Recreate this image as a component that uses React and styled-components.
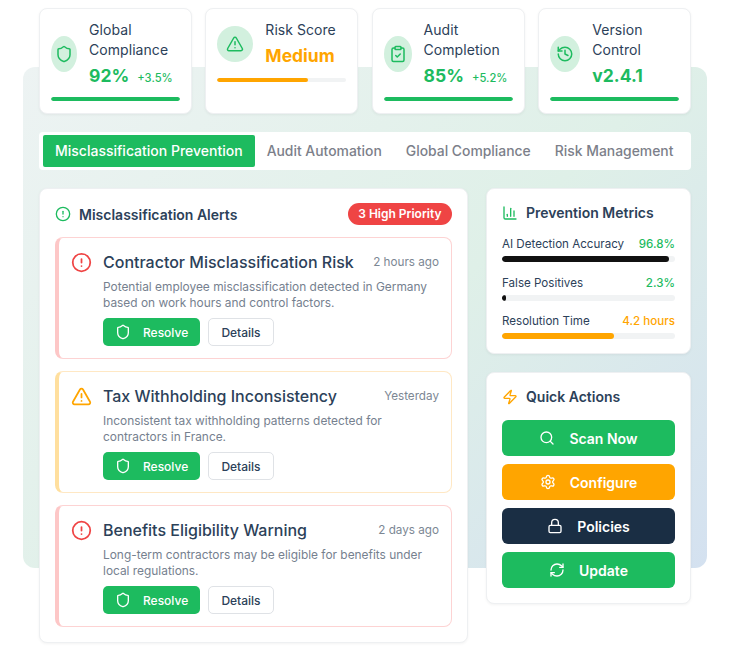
import React from "react";
import styled, { createGlobalStyle } from "styled-components";
import {
  Shield,
  TriangleAlert,
  ClipboardCheck,
  History,
  CircleAlert,
  ChartColumn,
  Zap,
  Search,
  Settings,
  Lock,
  RefreshCw,
} from "lucide-react";

const GREEN = "#1dbb5f";
const ORANGE = "#ffa500";
const RED = "#ef4444";
const NAVY = "#1a2e44";

const stats = [
  { label: "Global Compliance", value: "92%", delta: "+3.5%", icon: Shield, fill: 100 },
  { label: "Risk Score", value: "Medium", icon: TriangleAlert, fill: 70, warn: true },
  { label: "Audit Completion", value: "85%", delta: "+5.2%", icon: ClipboardCheck, fill: 100 },
  { label: "Version Control", value: "v2.4.1", icon: History, fill: 100 },
];

const tabs = ["Misclassification Prevention", "Audit Automation", "Global Compliance", "Risk Management"];

const alerts = [
  {
    title: "Contractor Misclassification Risk",
    time: "2 hours ago",
    text: "Potential employee misclassification detected in Germany based on work hours and control factors.",
    level: "high",
  },
  {
    title: "Tax Withholding Inconsistency",
    time: "Yesterday",
    text: "Inconsistent tax withholding patterns detected for contractors in France.",
    level: "medium",
  },
  {
    title: "Benefits Eligibility Warning",
    time: "2 days ago",
    text: "Long-term contractors may be eligible for benefits under local regulations.",
    level: "high",
  },
];

const metrics = [
  { label: "AI Detection Accuracy", value: "96.8%", fill: 96.8 },
  { label: "False Positives", value: "2.3%", fill: 2.3 },
  { label: "Resolution Time", value: "4.2 hours", fill: 65, warn: true },
];

const actions = [
  { label: "Scan Now", icon: Search, color: GREEN },
  { label: "Configure", icon: Settings, color: ORANGE },
  { label: "Policies", icon: Lock, color: NAVY },
  { label: "Update", icon: RefreshCw, color: GREEN },
];

const GlobalStyle = createGlobalStyle`
  body {
    margin: 0;
    background: #fff;
    font-family: Inter, "Liberation Sans", sans-serif;
  }
`;

const Page = styled.div`
  position: relative;
  z-index: 0;
  box-sizing: border-box;
  width: 730px;
  height: 670px;
  padding: 8px 39px 0;

  &::before {
    content: "";
    position: absolute;
    z-index: -1;
    left: 23px;
    top: 67px;
    width: 684px;
    height: 501px;
    border-radius: 12px;
    background: linear-gradient(135deg, #edf3f3 0%, #dff0e8 55%, #d4e1f0 100%);
  }
`;

const StatGrid = styled.div`
  display: grid;
  grid-template-columns: repeat(4, minmax(0, 1fr));
  column-gap: 13.33px;
  height: 106px;
`;

const StatCard = styled.div`
  box-sizing: border-box;
  padding: 11px 11px 0;
  background: #fff;
  border: 1px solid #eef0f2;
  border-radius: 8px;
  box-shadow: 0 1px 3px rgba(0, 0, 0, 0.05);
`;

const StatTop = styled.div`
  display: flex;
  align-items: center;
  gap: 12px;
`;

const StatIcon = styled.div`
  display: flex;
  align-items: center;
  justify-content: center;
  width: 36px;
  height: 36px;
  border-radius: 50%;
  background: #d2f0de;
  color: ${GREEN};
  svg {
    flex: none;
  }
`;

const StatLabel = styled.div`
  font-size: 14px;
  line-height: 20px;
  letter-spacing: 0.05px;
  color: #2c4159;
`;

const StatRow = styled.div`
  display: flex;
  align-items: baseline;
  gap: 8px;
  margin-top: 4px;
  white-space: nowrap;
`;

const StatValue = styled.span`
  font-size: 17.5px;
  line-height: 24px;
  font-weight: 700;
  color: ${(p) => (p.$warn ? ORANGE : GREEN)};
`;

const StatDelta = styled.span`
  font-size: 11.2px;
  font-weight: 500;
  color: ${GREEN};
`;

const Track = styled.div`
  height: ${(p) => p.$h}px;
  margin-top: ${(p) => p.$mt}px;
  border-radius: 3px;
  background: #f1f3f4;
  overflow: hidden;
`;

const Fill = styled.div`
  height: 100%;
  border-radius: 3px;
  background: ${(p) => p.$color};
`;

const TabBar = styled.div`
  display: flex;
  box-sizing: border-box;
  height: 38px;
  margin-top: 18px;
  padding: 3px 4px;
  background: #fff;
  border-radius: 4px;
`;

const Tab = styled.div`
  display: flex;
  align-items: center;
  padding: 0 12px 1px;
  border-radius: 2px;
  font-size: ${(p) => (p.$active ? 14 : 13.9)}px;
  font-weight: 500;
  white-space: nowrap;
  color: ${(p) => (p.$active ? "#fff" : "#7c7f8a")};
  background: ${(p) => (p.$active ? GREEN : "transparent")};
`;

const Columns = styled.div`
  display: grid;
  grid-template-columns: 429px 205px;
  column-gap: 18px;
  align-items: start;
  margin-top: 18px;
`;

const Panel = styled.div`
  box-sizing: border-box;
  padding: 15px;
  background: #fff;
  border: 1px solid #eef0f2;
  border-radius: 8px;
  box-shadow: 0 1px 3px rgba(0, 0, 0, 0.05);
`;

const AlertPanel = styled(Panel)`
  padding-top: 14px;
`;

const MetricPanel = styled(Panel)`
  padding-bottom: 14px;
`;

const PanelHead = styled.div`
  display: flex;
  align-items: center;
  justify-content: space-between;
  height: 22px;
`;

const PanelTitle = styled.div`
  display: flex;
  align-items: center;
  gap: 8px;
  font-size: 14px;
  font-weight: 600;
  color: #2c4159;
  svg {
    color: ${(p) => p.$icon};
  }
`;

const Badge = styled.span`
  padding: 0 10.5px;
  line-height: 22px;
  border-radius: 11px;
  background: ${RED};
  color: #fff;
  font-size: 12px;
  font-weight: 600;
`;

const AlertList = styled.div`
  display: flex;
  flex-direction: column;
  gap: 12px;
  margin-top: 12px;
`;

const AlertCard = styled.div`
  display: flex;
  gap: 13px;
  box-sizing: border-box;
  height: 122px;
  padding: 14px 12px 12px;
  border: 1px solid ${(p) => (p.$level === "high" ? "#fdd3d3" : "#ffe8c4")};
  border-left: 4px solid ${(p) => (p.$level === "high" ? "#fdc7c7" : "#ffdf9e")};
  border-radius: 8px;
  background: #fff;
`;

const AlertIcon = styled.div`
  flex: none;
  height: 21px;
  margin-right: -2px;
  color: ${(p) => (p.$level === "high" ? RED : ORANGE)};
`;

const AlertBody = styled.div`
  flex: 1;
`;

const AlertHead = styled.div`
  display: flex;
  align-items: center;
  justify-content: space-between;
  height: 20px;
`;

const AlertTitle = styled.div`
  font-size: 16px;
  font-weight: 500;
  color: #2c4159;
`;

const AlertTime = styled.div`
  font-size: 11.7px;
  color: #7c8794;
`;

const AlertText = styled.div`
  margin-top: 7px;
  font-size: 11.9px;
  line-height: 16px;
  color: #76818f;
`;

const ButtonRow = styled.div`
  display: flex;
  gap: 8px;
  margin-top: 7px;
`;

const ResolveButton = styled.button`
  display: flex;
  align-items: center;
  gap: 12px;
  height: 28px;
  width: 97px;
  padding: 0 0 0 12px;
  border: 0;
  border-radius: 5px;
  background: ${GREEN};
  color: #fff;
  font: 500 12px Inter, sans-serif;
`;

const DetailsButton = styled.button`
  height: 28px;
  width: 66px;
  padding: 0;
  border: 1px solid #dfe2e6;
  border-radius: 5px;
  background: #fff;
  color: #2c4159;
  font: 500 12px Inter, sans-serif;
`;

const SideColumn = styled.div`
  display: flex;
  flex-direction: column;
  gap: 18px;
`;

const MetricRow = styled.div`
  margin-top: ${(p) => (p.$first ? 15 : 12.5)}px;
`;

const MetricHead = styled.div`
  display: flex;
  justify-content: space-between;
  font-size: 11.6px;
  line-height: 16px;
  color: #2c4159;
`;

const MetricValue = styled.span`
  font-weight: 500;
  color: ${(p) => (p.$warn ? ORANGE : GREEN)};
`;

const ActionList = styled.div`
  display: flex;
  flex-direction: column;
  gap: 8px;
  margin-top: 15px;
`;

const ActionButton = styled.button`
  display: flex;
  align-items: center;
  justify-content: center;
  gap: 14px;
  height: 36px;
  padding: 0;
  border: 0;
  border-radius: 6px;
  background: ${(p) => p.$color};
  color: #fff;
  font: 600 14px Inter, sans-serif;
`;

function StatTile({ stat }) {
  const Icon = stat.icon;
  return (
    <StatCard>
      <StatTop>
        <StatIcon>
          <Icon size={18} />
        </StatIcon>
        <div>
          <StatLabel>{stat.label}</StatLabel>
          <StatRow>
            <StatValue $warn={stat.warn}>{stat.value}</StatValue>
            {stat.delta && <StatDelta>{stat.delta}</StatDelta>}
          </StatRow>
        </div>
      </StatTop>
      <Track $h={4} $mt={stat.warn ? 10 : 9}>
        <Fill $color={stat.warn ? ORANGE : GREEN} style={{ width: `${stat.fill}%` }} />
      </Track>
    </StatCard>
  );
}

function AlertItem({ alert }) {
  const Icon = alert.level === "high" ? CircleAlert : TriangleAlert;
  return (
    <AlertCard $level={alert.level}>
      <AlertIcon $level={alert.level}>
        <Icon size={21} />
      </AlertIcon>
      <AlertBody>
        <AlertHead>
          <AlertTitle>{alert.title}</AlertTitle>
          <AlertTime>{alert.time}</AlertTime>
        </AlertHead>
        <AlertText>{alert.text}</AlertText>
        <ButtonRow>
          <ResolveButton>
            <Shield size={16} />
            Resolve
          </ResolveButton>
          <DetailsButton>Details</DetailsButton>
        </ButtonRow>
      </AlertBody>
    </AlertCard>
  );
}

export default function App() {
  return (
    <Page>
      <GlobalStyle />
      <StatGrid>
        {stats.map((s) => (
          <StatTile key={s.label} stat={s} />
        ))}
      </StatGrid>

      <TabBar>
        {tabs.map((t, i) => (
          <Tab key={t} $active={i === 0}>
            {t}
          </Tab>
        ))}
      </TabBar>

      <Columns>
        <AlertPanel>
          <PanelHead>
            <PanelTitle $icon={GREEN}>
              <CircleAlert size={16} />
              Misclassification Alerts
            </PanelTitle>
            <Badge>3 High Priority</Badge>
          </PanelHead>
          <AlertList>
            {alerts.map((a) => (
              <AlertItem key={a.title} alert={a} />
            ))}
          </AlertList>
        </AlertPanel>

        <SideColumn>
          <MetricPanel>
            <PanelTitle $icon={GREEN}>
              <ChartColumn size={16} />
              Prevention Metrics
            </PanelTitle>
            {metrics.map((m, i) => (
              <MetricRow key={m.label} $first={i === 0}>
                <MetricHead>
                  <span>{m.label}</span>
                  <MetricValue $warn={m.warn}>{m.value}</MetricValue>
                </MetricHead>
                <Track $h={6} $mt={4}>
                  <Fill $color={m.warn ? ORANGE : "#111"} style={{ width: `${m.fill}%` }} />
                </Track>
              </MetricRow>
            ))}
          </MetricPanel>

          <Panel>
            <PanelTitle $icon={ORANGE}>
              <Zap size={16} />
              Quick Actions
            </PanelTitle>
            <ActionList>
              {actions.map((a) => {
                const Icon = a.icon;
                return (
                  <ActionButton key={a.label} $color={a.color}>
                    <Icon size={16} />
                    {a.label}
                  </ActionButton>
                );
              })}
            </ActionList>
          </Panel>
        </SideColumn>
      </Columns>
    </Page>
  );
}
